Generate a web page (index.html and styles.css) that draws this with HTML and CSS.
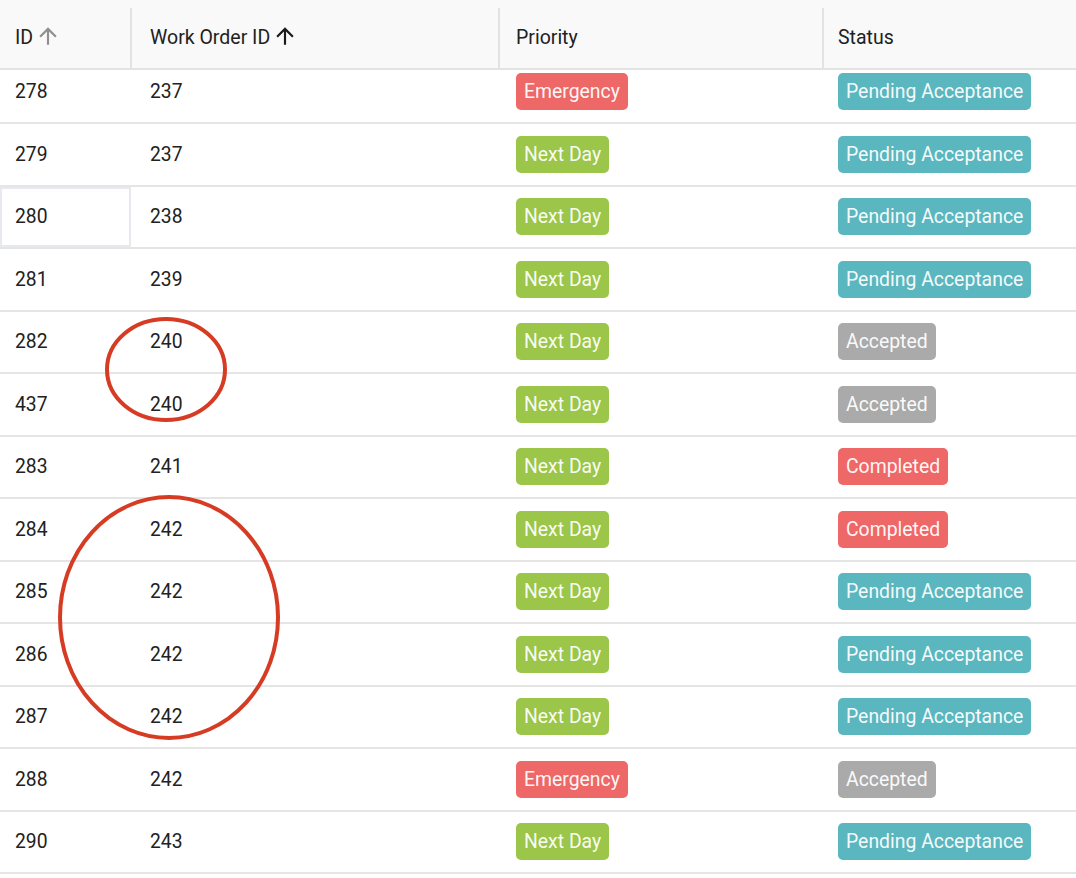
FILE: index.html
```html
<!DOCTYPE html>
<html>
<head>
<meta charset="utf-8">
<link rel="stylesheet" href="styles.css">
</head>
<body>
<div class="grid">
  <div class="header">
    <div class="hcell c1">ID <svg class="sort dim" viewBox="0 0 24 24"><path d="M4 12l1.41 1.41L11 7.83V20h2V7.83l5.58 5.59L20 12l-8-8-8 8z"/></svg><span class="sep"></span></div>
    <div class="hcell c2">Work Order ID <svg class="sort" viewBox="0 0 24 24"><path d="M4 12l1.41 1.41L11 7.83V20h2V7.83l5.58 5.59L20 12l-8-8-8 8z"/></svg><span class="sep"></span></div>
    <div class="hcell c3">Priority<span class="sep"></span></div>
    <div class="hcell c4">Status</div>
  </div>
  <div class="body">
    <div class="rows">
      <div class="row"><div class="cell c1">278</div><div class="cell c2">237</div><div class="cell c3"><span class="badge red">Emergency</span></div><div class="cell c4"><span class="badge teal">Pending Acceptance</span></div></div>
      <div class="row"><div class="cell c1">279</div><div class="cell c2">237</div><div class="cell c3"><span class="badge green">Next Day</span></div><div class="cell c4"><span class="badge teal">Pending Acceptance</span></div></div>
      <div class="row"><div class="cell c1 focus">280</div><div class="cell c2">238</div><div class="cell c3"><span class="badge green">Next Day</span></div><div class="cell c4"><span class="badge teal">Pending Acceptance</span></div></div>
      <div class="row"><div class="cell c1">281</div><div class="cell c2">239</div><div class="cell c3"><span class="badge green">Next Day</span></div><div class="cell c4"><span class="badge teal">Pending Acceptance</span></div></div>
      <div class="row"><div class="cell c1">282</div><div class="cell c2">240</div><div class="cell c3"><span class="badge green">Next Day</span></div><div class="cell c4"><span class="badge gray">Accepted</span></div></div>
      <div class="row"><div class="cell c1">437</div><div class="cell c2">240</div><div class="cell c3"><span class="badge green">Next Day</span></div><div class="cell c4"><span class="badge gray">Accepted</span></div></div>
      <div class="row"><div class="cell c1">283</div><div class="cell c2">241</div><div class="cell c3"><span class="badge green">Next Day</span></div><div class="cell c4"><span class="badge red">Completed</span></div></div>
      <div class="row"><div class="cell c1">284</div><div class="cell c2">242</div><div class="cell c3"><span class="badge green">Next Day</span></div><div class="cell c4"><span class="badge red">Completed</span></div></div>
      <div class="row"><div class="cell c1">285</div><div class="cell c2">242</div><div class="cell c3"><span class="badge green">Next Day</span></div><div class="cell c4"><span class="badge teal">Pending Acceptance</span></div></div>
      <div class="row"><div class="cell c1">286</div><div class="cell c2">242</div><div class="cell c3"><span class="badge green">Next Day</span></div><div class="cell c4"><span class="badge teal">Pending Acceptance</span></div></div>
      <div class="row"><div class="cell c1">287</div><div class="cell c2">242</div><div class="cell c3"><span class="badge green">Next Day</span></div><div class="cell c4"><span class="badge teal">Pending Acceptance</span></div></div>
      <div class="row"><div class="cell c1">288</div><div class="cell c2">242</div><div class="cell c3"><span class="badge red">Emergency</span></div><div class="cell c4"><span class="badge gray">Accepted</span></div></div>
      <div class="row"><div class="cell c1">290</div><div class="cell c2">243</div><div class="cell c3"><span class="badge green">Next Day</span></div><div class="cell c4"><span class="badge teal">Pending Acceptance</span></div></div>
      <div class="row empty"></div>
    </div>
  </div>
</div>
<svg class="marks" width="1076" height="878" viewBox="0 0 1076 878">
  <ellipse cx="166" cy="369.5" rx="59" ry="50.5"/>
  <ellipse cx="169" cy="617.5" rx="109" ry="120.5"/>
</svg>
</body>
</html>
```

FILE: styles.css
```css
html, body {
  margin: 0;
  padding: 0;
  background: #ffffff;
}
body {
  font-family: Roboto, "Liberation Sans", Arial, sans-serif;
  color: #212121;
  width: 1076px;
  height: 878px;
  overflow: hidden;
  position: relative;
}
.grid {
  display: flex;
  flex-direction: column;
  height: 878px;
}
.header {
  display: grid;
  grid-template-columns: 131px 368px 324px 1fr;
  height: 68px;
  background: #f9f9f9;
  border-bottom: 2px solid #e3e3e3;
  position: relative;
  z-index: 2;
}
.hcell {
  display: flex;
  align-items: center;
  font-size: 19.5px;
  padding-top: 6px;
  color: #212121;
  position: relative;
}
.sep {
  position: absolute;
  right: -1px;
  top: 8px;
  bottom: 0;
  width: 2px;
  background: #e3e3e3;
}
.sort {
  width: 26px;
  height: 26px;
  margin-left: 2px;
  margin-top: -2px;
  fill: #1a1a1a;
}
.sort.dim {
  fill: #8f8f8f;
}
.c1 { padding-left: 15px; }
.c2 { padding-left: 19px; }
.c3 { padding-left: 17px; }
.c4 { padding-left: 15px; }
.body {
  flex: 1;
  overflow: hidden;
}
.rows {
  margin-top: -8.5px;
}
.row {
  display: grid;
  grid-template-columns: 131px 368px 324px 1fr;
  height: 60.5px;
  border-bottom: 2px solid #e5e5e5;
}
.cell {
  display: flex;
  align-items: center;
  font-size: 19.3px;
  color: #212121;
  box-sizing: border-box;
}
.cell.focus {
  box-shadow: inset 0 0 0 2px #e6eaee;
}
.badge {
  display: inline-block;
  height: 37px;
  line-height: 37px;
  padding: 0 8px;
  border-radius: 5px;
  color: rgba(255, 255, 255, 0.96);
  font-size: 19.4px;
}
.red { background: #ef6868; }
.green { background: #9bc64a; }
.teal { background: #5bb7bf; }
.gray { background: #aaaaaa; }
.marks {
  position: absolute;
  left: 0;
  top: 0;
  pointer-events: none;
  z-index: 5;
}
.marks ellipse {
  fill: none;
  stroke: #d63c24;
  stroke-width: 4;
}
```
